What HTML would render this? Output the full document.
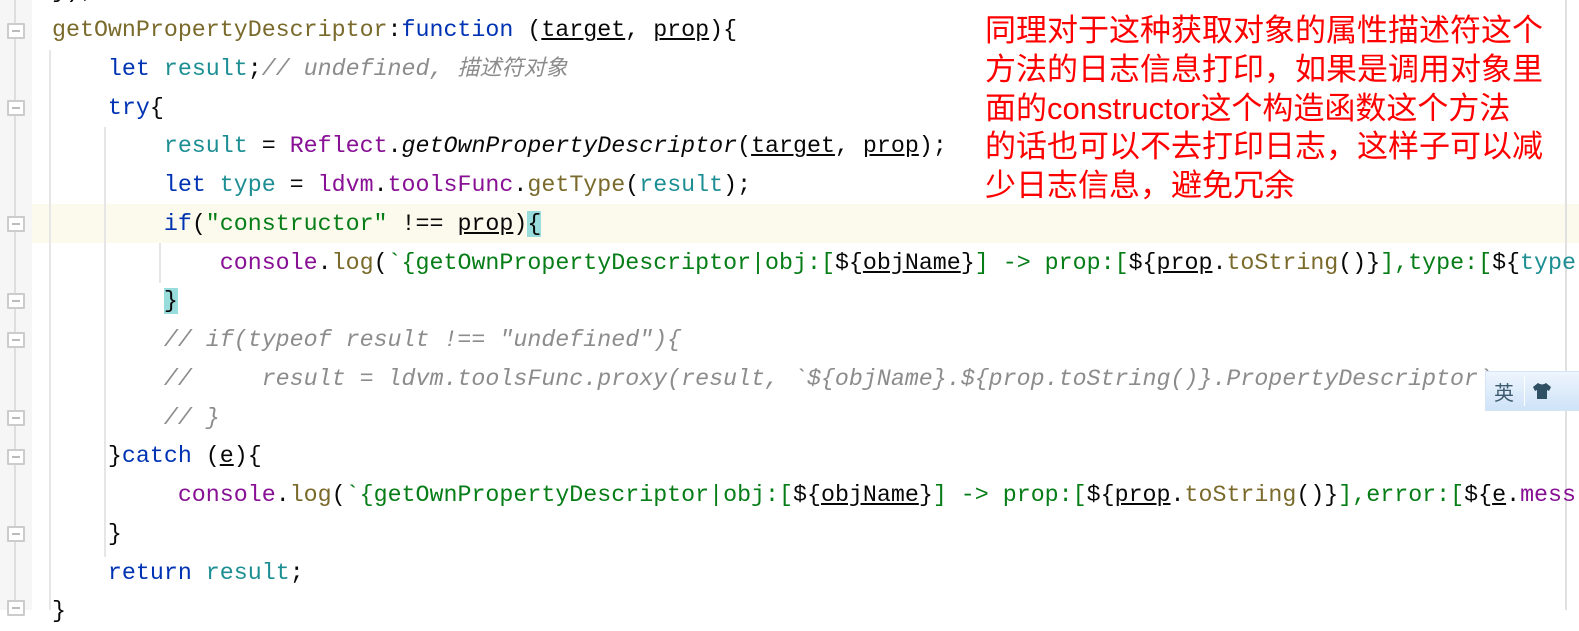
<!DOCTYPE html>
<html><head><meta charset="utf-8"><style>
body{margin:0;width:1579px;height:610px;overflow:hidden;background:#fff;position:relative;font-family:"Liberation Mono",monospace;}
.g{position:absolute;left:0;top:0;width:32px;height:610px;background:#f6f6f6;}
.gl{position:absolute;left:14px;top:0;width:2px;height:610px;background:#dedede;}
.ln{position:absolute;left:52px;height:39px;line-height:39px;font-size:23.3px;white-space:pre;color:#080808;}
.cur{position:absolute;left:32px;top:204px;width:1547px;height:39px;background:#fcfaed;}
.k{color:#0033b3}.v{color:#1d8f94}.p{color:#871094}.s{color:#067d17}.c{color:#8c8c8c;font-style:italic}.f{color:#7a6a2b}.u{text-decoration:underline}
.it{font-style:italic}.m{background:#99dcdc}
.ig{position:absolute;width:2px;background:#e6e6e6;}
.fold{position:absolute;left:7px;width:14px;height:12px;border:2px solid #ccc;background:#fff;border-radius:1px;}
.fold:after{content:"";position:absolute;left:3px;top:5px;width:8px;height:2px;background:#bbb;}
.red{position:absolute;left:985px;top:12px;font-family:"Liberation Sans","Noto Sans CJK SC",sans-serif;font-size:31px;line-height:38.75px;color:#ff0000;white-space:pre;}
.rm{position:absolute;left:1565px;top:0;width:2px;height:610px;background:#e0e0e0;}
.ime{position:absolute;left:1485px;top:371px;width:94px;height:38px;background:linear-gradient(#eef5fd,#cfe3f8);border:1px solid #d5e5f5;font-family:"Noto Sans CJK SC",sans-serif;font-size:20px;color:#3c5a70;}
</style></head><body>
<div class="g"></div><div class="gl"></div>
<div class="cur"></div>
<div class="rm"></div>
<div class="ig" style="left:49px;top:50px;height:560px"></div>
<div class="ig" style="left:104px;top:127px;height:430px"></div>
<div class="ig" style="left:159px;top:243px;height:40px"></div>
<div class="ig" style="left:104px;top:476px;height:40px"></div>
<div class="fold" style="top:23px"></div>
<div class="fold" style="top:100px"></div>
<div class="fold" style="top:216px"></div>
<div class="fold" style="top:293px"></div>
<div class="fold" style="top:332px"></div>
<div class="fold" style="top:410px"></div>
<div class="fold" style="top:449px"></div>
<div class="fold" style="top:526px"></div>
<div class="fold" style="top:600px"></div>

<div class="ln" style="top:-28px">});</div>
<div class="ln" style="top:11px"><span class="f">getOwnPropertyDescriptor</span>:<span class="k">function</span> (<span class="u">target</span>, <span class="u">prop</span>){</div>
<div class="ln" style="top:49.75px">    <span class="k">let</span> <span class="v">result</span>;<span class="c">// undefined, <span style="font-family:'Noto Sans CJK SC',sans-serif;line-height:0;font-size:22px">描述符对象</span></span></div>
<div class="ln" style="top:88.5px">    <span class="k">try</span>{</div>
<div class="ln" style="top:127.25px">        <span class="v">result</span> = <span class="p">Reflect</span>.<span class="it">getOwnPropertyDescriptor</span>(<span class="u">target</span>, <span class="u">prop</span>);</div>
<div class="ln" style="top:166px">        <span class="k">let</span> <span class="v">type</span> = <span class="p">ldvm</span>.<span class="p">toolsFunc</span>.<span class="f">getType</span>(<span class="v">result</span>);</div>
<div class="ln" style="top:204.75px">        <span class="k">if</span>(<span class="s">"constructor"</span> !== <span class="u">prop</span>)<span class="m">{</span></div>
<div class="ln" style="top:243.5px">            <span class="p">console</span>.<span class="f">log</span>(<span class="s">`{getOwnPropertyDescriptor|obj:[</span>${<span class="u">objName</span>}<span class="s">] -&gt; prop:[</span>${<span class="u">prop</span>.<span class="f">toString</span>()}<span class="s">],type:[</span>${<span class="v">type</span></div>
<div class="ln" style="top:282.25px">        <span class="m">}</span></div>
<div class="ln c" style="top:321px">        // if(typeof result !== "undefined"){</div>
<div class="ln c" style="top:359.75px">        //     result = ldvm.toolsFunc.proxy(result, `${objName}.${prop.toString()}.PropertyDescriptor`</div>
<div class="ln c" style="top:398.5px">        // }</div>
<div class="ln" style="top:437.25px">    }<span class="k">catch</span> (<span class="u">e</span>){</div>
<div class="ln" style="top:476px">         <span class="p">console</span>.<span class="f">log</span>(<span class="s">`{getOwnPropertyDescriptor|obj:[</span>${<span class="u">objName</span>}<span class="s">] -&gt; prop:[</span>${<span class="u">prop</span>.<span class="f">toString</span>()}<span class="s">],error:[</span>${<span class="u">e</span>.<span class="p">mess</span></div>
<div class="ln" style="top:514.75px">    }</div>
<div class="ln" style="top:553.5px">    <span class="k">return</span> <span class="v">result</span>;</div>
<div class="ln" style="top:592.25px">}</div>

<div class="red">同理对于这种获取对象的属性描述符这个
方法的日志信息打印，如果是调用对象里
面的constructor这个构造函数这个方法
的话也可以不去打印日志，这样子可以减
少日志信息，避免冗余</div>
<div class="ime"><span style="position:absolute;left:8px;top:5px">英</span><span style="position:absolute;left:38px;top:4px;width:1px;height:30px;background:#fff"></span><svg style="position:absolute;left:46px;top:10px" width="20" height="18" viewBox="0 0 20 18"><path d="M6 1 L1 5 L3 9 L5 8 L5 17 L15 17 L15 8 L17 9 L19 5 L14 1 Q10 4 6 1Z" fill="#2f4f63"/></svg></div>
</body></html>
